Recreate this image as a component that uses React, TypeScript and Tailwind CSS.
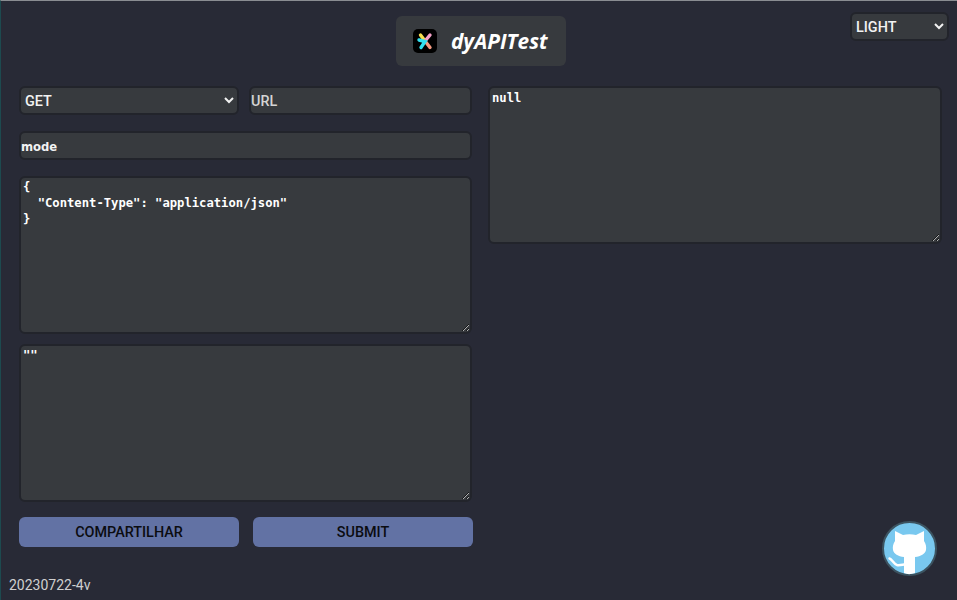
const fieldClass =
  "bg-[#373a3e] border-2 border-[#22242b] rounded-md text-[#f2f2f2] outline-none";
const monoFont = "font-['DejaVu_Sans_Mono',monospace]";
const buttonClass =
  "h-[30px] w-[220px] shrink-0 rounded-md bg-[#6272a4] pt-[1px] text-[14.4px] font-medium text-[#0b0c10] font-['Roboto',sans-serif]";
const areaClass = `${fieldClass} h-[158px] shrink-0 px-[2px] py-[1px] text-[12.2px] leading-[16px] font-bold text-white ${monoFont}`;

function Logo() {
  return (
    <svg width="24" height="24" viewBox="0 0 24 24">
      <rect width="24" height="24" rx="5" fill="#000" />
      <g strokeWidth="3.4" strokeLinecap="round" fill="none">
        <path d="M7.5 6 L12 12" stroke="#f5e050" />
        <path d="M17 6 L12 12" stroke="#f5a0c8" />
        <path d="M12 12 L17 18.5" stroke="#f59a80" />
        <path d="M6 11 L12 12.5 L8 18.5" stroke="#30e0f0" />
      </g>
    </svg>
  );
}

function GithubBadge() {
  return (
    <svg width="55" height="55" viewBox="0 0 55 55">
      <circle cx="27.5" cy="27.5" r="26.5" fill="#79c8ef" stroke="#3c5360" strokeWidth="2" />
      <path
        fill="#fff"
        d="M13 20 L13 10 L21 14 C25 13 30 13 34 14 L42 10 L42 20 C44 23 44.5 26 44 29 C43 33 39 35.5 33 36 L33 52 C29 53.5 25 53.5 22 52 L22 36 C16 35.5 12 33 11 29 C10.5 26 11 23 13 20 Z"
      />
      <path
        fill="none"
        stroke="#fff"
        strokeWidth="2.5"
        strokeLinecap="round"
        d="M7.5 37.5 C10 38 11.5 43 15 44 C17 44.5 19 44 22 43.5"
      />
    </svg>
  );
}

export default function App() {
  return (
    <div className="h-[600px] w-[957px] overflow-hidden bg-[#282a36] border-t border-l border-t-[#8a8d92] border-l-[#1d4a4f] font-['Roboto',sans-serif]">
      {/* header */}
      <div className="flex h-[85px] justify-between pl-[395px] pr-2 pt-[15px]">
        <div className="flex h-[50px] w-[170px] items-center gap-[14px] rounded-md bg-[#373a3e] pl-[17px]">
          <Logo />
          <span className="mt-[1px] font-['Open_Sans',sans-serif] text-[20.8px] font-bold italic text-white">
            dyAPITest
          </span>
        </div>
        <select
          defaultValue="LIGHT"
          className={`${fieldClass} mt-[-4px] h-[29px] w-[99px] pt-[1px] text-[14.4px] font-medium`}
        >
          <option>LIGHT</option>
          <option>DARK</option>
        </select>
      </div>

      <div className="flex h-[514px] pl-[18px] pr-[14px]">
        {/* request */}
        <div className="flex w-[454px] flex-col">
          <div className="flex gap-[10px]">
            <select
              defaultValue="GET"
              className={`${fieldClass} h-[29px] w-[220px] pt-[2px] text-[14.4px] font-medium`}
            >
              <option>GET</option>
              <option>POST</option>
            </select>
            <input
              placeholder="URL"
              className={`${fieldClass} h-[29px] w-[223px] px-0 pt-[2px] text-[14.4px] font-medium placeholder:text-[#d4d4d4]`}
            />
          </div>
          <input
            defaultValue="mode"
            className={`${fieldClass} mt-4 h-[29px] w-[453px] shrink-0 pt-[2px] text-[11.6px] font-bold text-[#d8d8d8] font-['DejaVu_Sans',sans-serif]`}
          />
          <textarea
            readOnly
            defaultValue={'{\n  "Content-Type": "application/json"\n}'}
            className={`${areaClass} mt-4 w-[453px]`}
          />
          <textarea readOnly defaultValue={'""'} className={`${areaClass} mt-[10px] w-[453px]`} />
          <div className="mt-[15px] flex gap-[14px]">
            <button className={buttonClass}>COMPARTILHAR</button>
            <button className={buttonClass}>SUBMIT</button>
          </div>
          <span className="-ml-[10px] mt-[28px] text-[14px] text-[#d0d0d0]">20230722-4v</span>
        </div>

        {/* response */}
        <div className="ml-[15px] flex flex-1 flex-col">
          <textarea readOnly defaultValue="null" className={`${areaClass} w-[454px] pt-[2px]`} />
          <div className="mt-[277px] self-end pr-[6px]">
            <GithubBadge />
          </div>
        </div>
      </div>
    </div>
  );
}
